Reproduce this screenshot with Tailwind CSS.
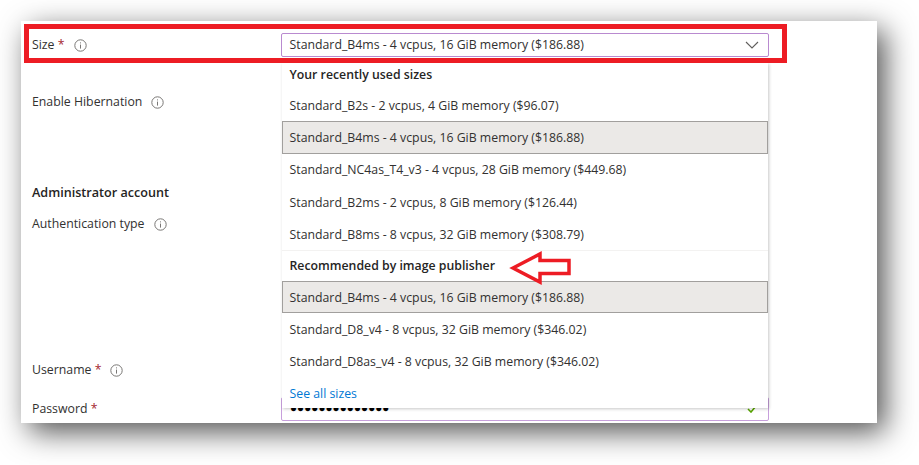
<!DOCTYPE html>
<html lang="en">
<head>
  <meta charset="UTF-8">
  <title>Size</title>
  <script src="https://cdn.jsdelivr.net/npm/@tailwindcss/browser@4"></script>
</head>
<body class="bg-white h-[465px] overflow-hidden font-['Open_Sans',sans-serif] text-[12.3px] text-[#323130]">
  <!-- Card -->
  <div class="relative ml-[21px] mt-[21px] w-[856px] h-[402px] bg-white flex shadow-[8px_9px_28px_rgba(0,0,0,0.68)]">
    <!-- Labels -->
    <div class="w-[260px] pl-[11px] flex flex-col">
      <div class="h-[24px] mt-[12px] flex items-center gap-[9px]">
        <span>Size <span class="text-[#a4262c]">*</span></span>
        <svg class="w-[13px] h-[13px]" viewBox="0 0 13 13" fill="none" stroke="#797775"><circle cx="6.5" cy="6.5" r="5.7"/><path d="M6.5 5.6v4M6.5 3.4v1"/></svg>
      </div>
      <div class="h-[24px] mt-[33px] flex items-center gap-[9px]">
        <span>Enable Hibernation</span>
        <svg class="w-[13px] h-[13px]" viewBox="0 0 13 13" fill="none" stroke="#797775"><circle cx="6.5" cy="6.5" r="5.7"/><path d="M6.5 5.6v4M6.5 3.4v1"/></svg>
      </div>
      <div class="h-[24px] mt-[67px] flex items-center font-semibold text-[12.6px] text-[#252423]">Administrator account</div>
      <div class="h-[24px] mt-[7px] flex items-center gap-[9px]">
        <span>Authentication type</span>
        <svg class="w-[13px] h-[13px]" viewBox="0 0 13 13" fill="none" stroke="#797775"><circle cx="6.5" cy="6.5" r="5.7"/><path d="M6.5 5.6v4M6.5 3.4v1"/></svg>
      </div>
      <div class="h-[24px] mt-[122px] flex items-center gap-[9px]">
        <span>Username <span class="text-[#a4262c]">*</span></span>
        <svg class="w-[13px] h-[13px]" viewBox="0 0 13 13" fill="none" stroke="#797775"><circle cx="6.5" cy="6.5" r="5.7"/><path d="M6.5 5.6v4M6.5 3.4v1"/></svg>
      </div>
      <div class="h-[24px] mt-[15px] flex items-center">
        <span>Password <span class="text-[#a4262c]">*</span></span>
      </div>
    </div>

    <!-- Fields -->
    <div class="w-[488px] flex flex-col">
      <div class="h-[24px] mt-[12px] border-[1.5px] border-[#b98ad0] rounded-[2px] pl-[7.5px] pr-[9px] flex items-center justify-between">
        <span>Standard_B4ms - 4 vcpus, 16 GiB memory ($186.88)</span>
        <svg class="w-[14px] h-[8px]" viewBox="0 0 14 8" fill="none" stroke="#605e5c" stroke-width="1.1"><path d="M1 1l6 6 6-6"/></svg>
      </div>
      <div class="h-[24px] mt-[340px] border-[1.5px] border-[#c79fdc] rounded-[2px] pl-[8px] pr-[11px] pb-[2px] flex items-center justify-between">
        <span class="text-[11.6px] leading-none text-black tracking-[0.1px]">●●●●●●●●●●●●●●</span>
        <svg class="w-[10px] h-[8px] mt-[2px]" viewBox="0 0 10 8" fill="none" stroke="#57a300" stroke-width="1.6"><path d="M1 4l3 3 5-6"/></svg>
      </div>
    </div>

    <!-- Dropdown list -->
    <div class="absolute left-[261px] top-[42px] w-[486px] h-[345px] bg-white flex flex-col shadow-[1px_1px_3px_rgba(0,0,0,0.22)]">
      <div class="h-[24px] pl-[7.5px] flex items-center font-semibold text-[#252423]">Your recently used sizes</div>
      <div class="h-[34px] pl-[7.5px] pt-[4px] flex items-center">Standard_B2s - 2 vcpus, 4 GiB memory ($96.07)</div>
      <div class="h-[33px] pl-[6.5px] pt-[1px] flex items-center bg-[#ebe9e7] border border-[#a19f9d]">Standard_B4ms - 4 vcpus, 16 GiB memory ($186.88)</div>
      <div class="h-[32px] pl-[7.5px] pt-[1px] flex items-center">Standard_NC4as_T4_v3 - 4 vcpus, 28 GiB memory ($449.68)</div>
      <div class="h-[32px] pl-[7.5px] pt-[2px] flex items-center">Standard_B2ms - 2 vcpus, 8 GiB memory ($126.44)</div>
      <div class="h-[32px] pl-[7.5px] pt-[2px] flex items-center">Standard_B8ms - 8 vcpus, 32 GiB memory ($308.79)</div>
      <div class="h-[31px] pl-[7.5px] pt-[1px] flex items-center font-semibold text-[#252423] border-t border-[#f3f2f1]">Recommended by image publisher</div>
      <div class="h-[32px] pl-[6.5px] pt-[2px] flex items-center bg-[#ebe9e7] border border-[#a19f9d]">Standard_B4ms - 4 vcpus, 16 GiB memory ($186.88)</div>
      <div class="h-[32px] pl-[7.5px] pt-[2px] flex items-center">Standard_D8_v4 - 8 vcpus, 32 GiB memory ($346.02)</div>
      <div class="h-[32px] pl-[7.5px] pt-[2px] flex items-center">Standard_D8as_v4 - 8 vcpus, 32 GiB memory ($346.02)</div>
      <div class="h-[31px] pl-[7.5px] pt-[3px] flex items-center text-[#0078d4]">See all sizes</div>
    </div>

    <!-- Annotations -->
    <div class="absolute left-[3px] top-[3px] w-[763px] h-[39px] border-[5px] border-[#ed1c24]"></div>
    <svg class="absolute left-[488px] top-[230px] w-[64px] h-[34px]" viewBox="0 0 64 34" fill="#fff" stroke="#ed1c24" stroke-width="3.5"><path d="M4 17L31 3V9.5H60V22.5H31V31Z"/></svg>
  </div>
</body>
</html>
